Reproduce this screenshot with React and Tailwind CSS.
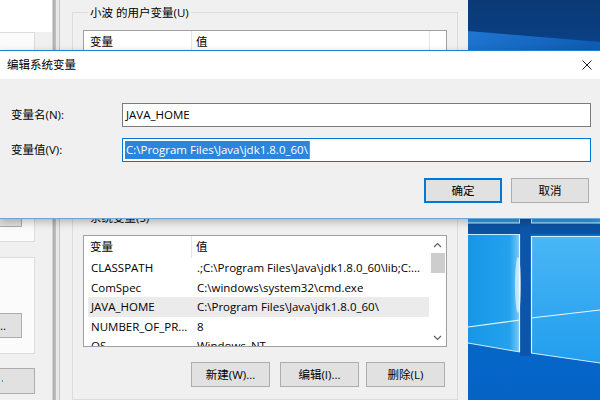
import React from "react";

const FONT = "font-['Open_Sans','Noto_Sans_CJK_SC',sans-serif]";

const Chevron = ({ up }) => (
  <svg width="9" height="6" viewBox="0 0 9 6">
    <path
      d={up ? "M1 5 L4.5 1.5 L8 5" : "M1 1 L4.5 4.5 L8 1"}
      fill="none"
      stroke="#606060"
      strokeWidth="1.2"
    />
  </svg>
);

const Scrollbar = ({ thumb = true }) => (
  <div className="w-[17px] shrink-0 flex flex-col items-center bg-white">
    <div className="h-[17px] flex items-center justify-center">
      <Chevron up />
    </div>
    {thumb && <div className="w-[14px] h-[20px] bg-[#cdcdcd]" />}
    <div className="flex-1" />
    <div className="h-[17px] flex items-center justify-center">
      <Chevron />
    </div>
  </div>
);

const ListHeader = () => (
  <div className="h-[22px] flex items-center shrink-0">
    <div className="w-[108px] h-full pl-[6px] flex items-center border-r border-[#e5e5e5]">变量</div>
    <div className="pl-[4px]">值</div>
  </div>
);

const rows = [
  ["CLASSPATH", ".;C:\\Program Files\\Java\\jdk1.8.0_60\\lib;C:..."],
  ["ComSpec", "C:\\windows\\system32\\cmd.exe"],
  ["JAVA_HOME", "C:\\Program Files\\Java\\jdk1.8.0_60\\", true],
  ["NUMBER_OF_PR...", "8"],
  ["OS", "Windows_NT"],
];

const Button = ({ children, className = "" }) => (
  <button className={`h-[25px] bg-[#e1e1e1] border border-[#adadad] flex items-center justify-center shrink-0 ${className}`}>
    {children}
  </button>
);

// window behind, cut off by the left edge of the screen
const LeftWindow = () => (
  <div className="w-[52px] h-full shrink-0 overflow-hidden flex justify-end bg-[#f0f0f0]">
    <div className="w-[352px] shrink-0 flex flex-col">
      <div className="h-[32px] bg-white" />
      <div className="h-[210px] w-[335px] bg-[#fbfbfb] border-t border-r border-b border-[#dcdcdc] flex flex-col justify-end items-end pb-[14px] pr-[12px]">
        <Button className="w-[78px]" />
      </div>
      <div className="mt-[15px] h-[97px] w-[335px] bg-[#fbfbfb] border-t border-r border-b border-[#dcdcdc] flex flex-col items-end pt-[55px] pr-[12px]">
        <Button className="w-[78px] justify-end pr-[15px]">...</Button>
      </div>
      <div className="mt-[14px] w-[335px] flex justify-end">
        <Button className="w-[100px] h-[26px] justify-start">
          <span className="ml-[66px] w-[1px] h-[2px] bg-[#3a96dd]" />
        </Button>
      </div>
    </div>
  </div>
);

const Edge = () => (
  <div className="w-[8px] h-full shrink-0 flex">
    <div className="w-[1px] bg-[#d6d6d6]" />
    <div className="w-[3px] bg-linear-to-r from-[#a9a9a9] to-[#c4c4c4]" />
    <div className="w-[3px] bg-[#e8e8e8]" />
    <div className="w-[1px] bg-[#c6c6c6]" />
  </div>
);

const EnvWindow = () => (
  <div className="w-[408px] h-full shrink-0 bg-[#f0f0f0] pl-[12px] pr-[10px] flex flex-col">
    <fieldset className="mt-[5px] h-[197px] border border-[#dcdcdc] px-[10px] shrink-0">
      <legend className="ml-[5px] px-[2px] leading-[15px]">小波 的用户变量(U)</legend>
      <div className="mt-[10px] h-[160px] bg-white border border-[#a0a0a0] flex">
        <div className="flex-1 flex flex-col">
          <ListHeader />
        </div>
        <div className="w-[17px] border-l border-[#e5e5e5]" />
      </div>
    </fieldset>
    <fieldset className="mt-[8px] flex-1 border border-[#dcdcdc] px-[10px]">
      <legend className="ml-[5px] px-[2px] leading-[15px]">系统变量(S)</legend>
      <div className="mt-[10px] h-[112px] bg-white border border-[#a0a0a0] flex overflow-hidden">
        <div className="flex-1 flex flex-col overflow-hidden">
          <ListHeader />
          {rows.map(([name, value, sel]) => (
            <div
              key={name}
              className={`ml-[4px] h-[19.5px] shrink-0 flex items-center whitespace-nowrap ${sel ? "bg-[#ebebeb]" : ""}`}
            >
              <div className="w-[109px] pl-[3px] overflow-hidden">{name}</div>
              <div className="overflow-hidden">{value}</div>
            </div>
          ))}
        </div>
        <Scrollbar />
      </div>
      <div className="mt-[15px] flex justify-end pr-[2px]">
        <Button className="w-[79px]">新建(W)...</Button>
        <Button className="w-[79px] ml-[10px]">编辑(I)...</Button>
        <Button className="w-[79px] ml-[7px]">删除(L)</Button>
      </div>
    </fieldset>
  </div>
);

const Desktop = () => (
  <div className="flex-1 h-full">
    <svg width="132" height="400" viewBox="0 0 132 400">
      <defs>
        <linearGradient id="sky" x1="0" y1="0" x2="0" y2="1">
          <stop offset="0" stopColor="#0b3a76" />
          <stop offset="0.55" stopColor="#0a3e80" />
          <stop offset="1" stopColor="#0c4d99" />
        </linearGradient>
        <linearGradient id="streak" x1="0" y1="0" x2="1" y2="0.3">
          <stop offset="0" stopColor="#1f76d2" />
          <stop offset="1" stopColor="#0f5db3" />
        </linearGradient>
        <linearGradient id="low" x1="0" y1="0" x2="0" y2="1">
          <stop offset="0" stopColor="#0b7ad8" />
          <stop offset="1" stopColor="#0563c6" />
        </linearGradient>
        <linearGradient id="paneL" x1="0" y1="0" x2="1" y2="0">
          <stop offset="0" stopColor="#1696e6" />
          <stop offset="0.8" stopColor="#24a2ee" />
          <stop offset="1" stopColor="#7fcdf8" />
        </linearGradient>
        <linearGradient id="paneR" x1="0" y1="0" x2="0" y2="1">
          <stop offset="0" stopColor="#4ab7f6" />
          <stop offset="1" stopColor="#229ded" />
        </linearGradient>
      </defs>
      <rect x="0" y="0" width="132" height="400" fill="url(#low)" />
      <rect x="0" y="0" width="132" height="60" fill="url(#sky)" />
      <polygon points="0,31 132,42 132,60 0,60" fill="url(#streak)" />

      {/* upper panes edge */}
      <rect x="0" y="216" width="132" height="8" fill="#2f9ee8" />
      <rect x="0" y="223" width="132" height="11" fill="#0c52a3" />
      <rect x="52" y="216" width="11" height="140" fill="#0c55a8" />
      <line x1="0" y1="223" x2="52" y2="223" stroke="#d8f0ff" strokeWidth="1" />
      <line x1="63" y1="223" x2="132" y2="223" stroke="#d8f0ff" strokeWidth="1" />
      <line x1="51.5" y1="216" x2="51.5" y2="223" stroke="#d8f0ff" strokeWidth="1" />
      <line x1="63.5" y1="216" x2="63.5" y2="223" stroke="#d8f0ff" strokeWidth="1" />

      {/* left pane */}
      <polygon points="0,234 52,234 52,352 0,343" fill="url(#paneL)" />
      <line x1="0" y1="234.5" x2="51" y2="234.5" stroke="#cdeeff" strokeWidth="1" />
      <line x1="51.5" y1="234" x2="51.5" y2="352" stroke="#e8f7ff" strokeWidth="1.2" />
      <line x1="0" y1="327" x2="52" y2="320" stroke="#e6f6ff" strokeWidth="1.2" />
      <line x1="0" y1="343" x2="52" y2="352" stroke="#cdeeff" strokeWidth="1" />
      <ellipse cx="50" cy="285" rx="3" ry="28" fill="#ffffff" opacity="0.6" />

      {/* right pane */}
      <polygon points="63,236 132,236 132,363 63,353" fill="url(#paneR)" />
      <line x1="63" y1="236.5" x2="132" y2="236.5" stroke="#d8f2ff" strokeWidth="1" />
      <line x1="63.5" y1="236" x2="63.5" y2="353" stroke="#e8f7ff" strokeWidth="1.2" />
      <line x1="63" y1="318" x2="132" y2="310" stroke="#e6f6ff" strokeWidth="1.2" />
      <line x1="63" y1="353" x2="132" y2="363" stroke="#cdeeff" strokeWidth="1" />
    </svg>
  </div>
);

const Dialog = () => (
  <div className="absolute left-0 top-[50px] w-[600px] h-[169px] bg-[#f0f0f0] border-t border-[#1883d7] border-b border-b-[#6ea6da] shadow-[0_3px_8px_rgba(0,0,0,0.25)] flex flex-col">
    <div className="h-[28px] bg-white flex items-center justify-between pl-[7px] pr-[8px] shrink-0">
      <span>编辑系统变量</span>
      <svg width="10" height="10" viewBox="0 0 10 10">
        <path d="M0.5 0.5 L9.5 9.5 M9.5 0.5 L0.5 9.5" stroke="#222" strokeWidth="1" />
      </svg>
    </div>
    <div className="pt-[24px] flex flex-col">
      <div className="flex items-center h-[24px]">
        <div className="w-[122px] pl-[11px]">变量名(N):</div>
        <div className="w-[469px] h-[24px] bg-white border border-[#7a7a7a] pl-[3px] flex items-center">
          JAVA_HOME
        </div>
      </div>
      <div className="flex items-center h-[24px] mt-[11px]">
        <div className="w-[122px] pl-[11px]">变量值(V):</div>
        <div className="w-[469px] h-[24px] bg-white border border-[#0078d7] pl-[2px] flex items-center">
          <span className="bg-[#2c84dc] text-white h-[18px] leading-[18px] px-[1px] whitespace-nowrap">
            C:\Program Files\Java\jdk1.8.0_60\
          </span>
          <span className="w-[1px] h-[18px] bg-[#d08030]" />
        </div>
      </div>
      <div className="mt-[16px] flex justify-end gap-[9px] pr-[11px]">
        <button className="w-[78px] h-[25px] bg-[#e1e1e1] border-2 border-[#0078d7] flex items-center justify-center">
          确定
        </button>
        <Button className="w-[78px]">取消</Button>
      </div>
    </div>
  </div>
);

export default function App() {
  return (
    <div className={`relative w-[600px] h-[400px] overflow-hidden flex bg-[#f0f0f0] text-[11.5px] text-black ${FONT}`}>
      <LeftWindow />
      <Edge />
      <EnvWindow />
      <Desktop />
      <Dialog />
    </div>
  );
}
